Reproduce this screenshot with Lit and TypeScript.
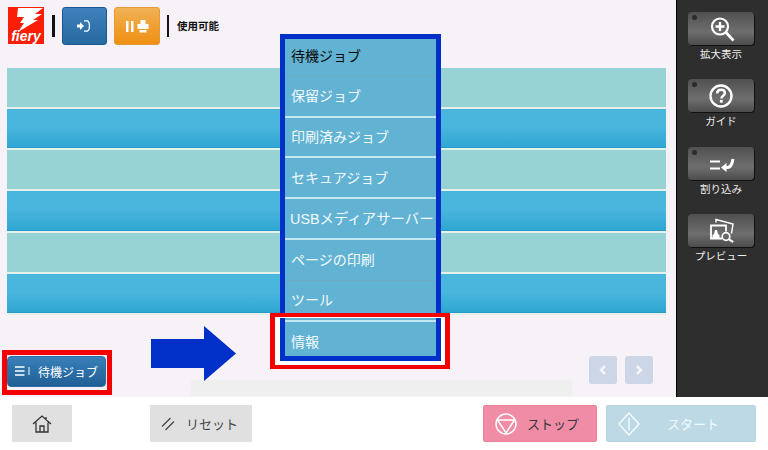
import { LitElement, html, css, svg } from "lit";
import { customElement } from "lit/decorators.js";

const MENU = [
  { t: "待機ジョブ", active: true, sep: false },
  { t: "保留ジョブ", sep: true },
  { t: "印刷済みジョブ", sep: true },
  { t: "セキュアジョブ", sep: true },
  { t: "USBメディアサーバー", sep: true, tight: true },
  { t: "ページの印刷", sep: false },
  { t: "ツール", sep: true },
  { t: "情報", sep: false },
];

const SIDE = [
  { t: "拡大表示", led: true, icon: svg`<circle cx="14" cy="11.5" r="8" fill="none" stroke="#fff" stroke-width="2.2"/><path d="M14 7v9M9.500 11.500h9" stroke="#fff" stroke-width="2.4"/><path d="M20 17.500l7.500 8" stroke="#fff" stroke-width="2.600"/>` },
  { t: "ガイド", led: true, icon: svg`<circle cx="15" cy="14" r="10.500" fill="none" stroke="#fff" stroke-width="2.400"/><path d="M11.200 11.500c0-2.600 1.700-3.800 3.900-3.800 2.300 0 3.800 1.300 3.800 3.200 0 2.800-3.500 2.800-3.500 5.600" fill="none" stroke="#fff" stroke-width="2.500"/><rect x="13.900" y="17.900" width="2.800" height="2.800" fill="#fff"/>` },
  { t: "割り込み", led: true, icon: svg`<path d="M4 12.500h10M4 19.500h10" stroke="#fff" stroke-width="2"/><path d="M15 18.500l5.500-4.500v9z" fill="#fff"/><path d="M19 18.500h2.500c3 0 4.500-2.500 5.500-8.500" fill="none" stroke="#fff" stroke-width="3"/>` },
  { t: "プレビュー", led: false, icon: svg`<path d="M10 6.500V3.500L27 8l-1.500 9.500" fill="none" stroke="#fff" stroke-width="1.500"/><path d="M16 22.500H5V9.500h15v6" fill="none" stroke="#fff" stroke-width="1.800"/><path d="M6.500 22.500V19l1.500-1 1-4h2l1 4 1.500 1v3.500z" fill="#fff"/><circle cx="20" cy="20.500" r="3.800" fill="none" stroke="#fff" stroke-width="1.700"/><path d="M22.800 23.200l4.400 3" stroke="#fff" stroke-width="2"/>` },
];

@customElement("app-root")
export class AppRoot extends LitElement {
  static styles = css`
    :host { display: block; width: 768px; height: 450px; overflow: hidden; position: relative; background: #fff;
      font-family: "Liberation Sans", "Noto Sans CJK JP", sans-serif; }
    .top { display: grid; grid-template-columns: 1fr 92px; height: 397px; }
    .main { background: #f6f2f7; display: flex; flex-direction: column; min-width: 0; }
    .head { height: 68px; box-sizing: border-box; padding: 7px 0 0 8px; display: flex; align-items: flex-start; flex: none; }
    .logo { width: 36px; height: 37px; background: #fa1e06; position: relative; overflow: hidden; display: block; flex: none; }
    .logo svg { position: absolute; left: 0; top: 0; }
    .logo span { position: absolute; left: 0; right: 0; top: 22px; text-align: center; color: #fff; font: italic bold 14px/14px "Liberation Sans", sans-serif; letter-spacing: 0; }
    .vr { width: 2.500px; height: 22px; background: #111; flex: none; margin-top: 8px; }
    .tb { width: 45px; height: 38px; box-sizing: border-box; border-radius: 3px; display: flex; align-items: center; justify-content: center; flex: none; }
    .tb.blue { background: linear-gradient(#3f81bd, #266aa0); border: 1px solid #1a5a94; margin-left: 7px; }
    .tb.orange { background: linear-gradient(#f1b255, #ef8f12); border: 1px solid #e69a35; margin-left: 7px; margin-right: 7px; width: 46px; }
    .status { font-size: 10.500px; line-height: 14px; font-weight: 700; color: #111; margin: 12px 0 0 8px; font-family: "Noto Sans CJK JP", sans-serif; }
    .rows { margin: 0 10px 0 7px; display: flex; flex-direction: column; flex: none; }
    .row { height: 39.170px; border-bottom: 2px solid #e6efea; }
    .row.a { background: #97d3d4; }
    .row.b { background: linear-gradient(#48b6dd, #4ab6dd 45%, #2fa7d3 97%, #1f97c4); }
    .footer { flex: 1; display: flex; position: relative; padding: 41px 0 0 7px; align-items: flex-start; }
    .queue { width: 99px; height: 31px; box-sizing: border-box; border-radius: 4px; background: linear-gradient(#3a80b9, #1f5f95); border: 1px solid #2a6ea3;
      color: #fff; font-size: 12px; display: flex; align-items: center; padding-left: 7px; gap: 8px; font-family: "Noto Sans CJK JP", sans-serif; }
    .strip { position: absolute; left: 191px; top: 65px; width: 381px; height: 16px; background: #efefef; }
    .pagers { margin-left: 483px; display: flex; gap: 8px; }
    .pg { width: 28px; height: 28px; border-radius: 3px; background: #ccd6e6; display: flex; align-items: center; justify-content: center; }
    .side { background: #2e2e2e; border-left: 1px solid #000; box-sizing: border-box; padding: 12px 0 0; display: flex; flex-direction: column; }
    .sb { width: 88px; height: 67.300px; display: flex; flex-direction: column; align-items: center; flex: none; }
    .sk { width: 66px; height: 33px; border-radius: 4px; background: linear-gradient(#505050, #6e6e6e 60%, #4c4c4c); box-shadow: 1px 1px 0 #111; position: relative; display: flex; align-items: center; justify-content: center; flex: none; }
    .led { position: absolute; left: 4px; top: 3px; width: 5px; height: 5px; border-radius: 50%; background: #2b2b2b; }
    .sl { color: #eee; font-size: 10.500px; line-height: 14px; margin-top: 2px; font-family: "Noto Sans CJK JP", sans-serif; white-space: nowrap; }
    .bottom { height: 53px; padding: 8px 12px 0; box-sizing: border-box; display: flex; align-items: flex-start; }
    .bb { height: 37px; box-sizing: border-box; display: flex; align-items: center; font-family: "Noto Sans CJK JP", sans-serif; font-size: 13px; flex: none; }
    .home { width: 60px; background: #e0e0e0; justify-content: center; }
    .reset { width: 102px; margin-left: 78px; background: #e0e0e0; color: #444; gap: 11px; padding-left: 11px; }
    .stop { width: 114px; margin-left: 231px; background: #f08ca5; border: 1px solid #ee8099; border-radius: 2px; color: #33393c; gap: 10px; padding-left: 11px; }
    .start { width: 150px; margin-left: 9px; background: #bcd9e5; border: 1px solid #b6d5e2; border-radius: 2px; color: #f3f9fb; gap: 27px; padding-left: 11px; }
    .menu { position: absolute; left: 280px; top: 34px; width: 161px; height: 327px; box-sizing: border-box; border: 5px solid #0030c8; background: #62b2d3; display: flex; flex-direction: column; overflow: hidden; }
    .mi { flex: none; height: 40.800px; box-sizing: border-box; padding: 0 0 2px 6px; color: #f2fafd; font-size: 14px; display: flex; align-items: center; white-space: nowrap; font-family: "Liberation Sans", "Noto Sans CJK JP", sans-serif; border-bottom: 1px solid #6fa9c4; }
    .mi:first-child { margin-top: -3px; }
    .mi.sep { border-bottom: 2px solid; border-image: linear-gradient(#24809f 50%, #c4e6f0 50%) 1; }
    .mi.active { color: #0a0a0a; }
    .mi.tight { padding-left: 5px; font-size: 14.400px; }
    .mi:last-child { border-bottom: 0; }
    .red { position: absolute; box-sizing: border-box; border: 4px solid #f50000; }
    .red.one { left: 2px; top: 350px; width: 110px; height: 45px; border-width: 5px; }
    .red.two { left: 270px; top: 313px; width: 180px; height: 56px; border-width: 4px 5px; box-shadow: inset 0 0 0 1px #fff; }
    .white { position: absolute; left: 274px; top: 361px; width: 172px; height: 4px; background: #fff; }
    .wl { position: absolute; width: 6px; top: 317px; height: 48px; background: #fff; }
    .arrow { position: absolute; left: 151px; top: 326px; }
  `;

  render() {
    return html`
      <div class="top">
        <div class="main">
          <div class="head">
            <div class="logo">
              <svg width="36" height="37" viewBox="0 0 36 37"><path d="M10 1h25l-8 6h7l-9 6h5L10 25l6-9h-4l4-6H9z" fill="#fff"/></svg>
              <span>fiery</span>
            </div>
            <div class="vr" style="margin-left:8px"></div>
            <div class="tb blue">
              <svg width="14" height="12" viewBox="0 0 14 12"><path d="M0 4.500h3V2l4 4-4 4V7.500H0z" fill="#fff"/><path d="M7 .8h3.500c1.500 1 2 3 2 5.200s-.5 4.200-2 5.200H7" fill="none" stroke="#fff" stroke-width="1.200"/></svg>
            </div>
            <div class="tb orange">
              <svg width="24" height="13" viewBox="0 0 24 13"><path d="M1 1h2.500v11H1zM6 1h2.500v11H6z" fill="#fff"/><path d="M15.500 0h5v4h3v5h-11V4h3z" fill="#fff"/><rect x="14.500" y="10" width="7" height="2.500" fill="#fff"/></svg>
            </div>
            <div class="vr"></div>
            <div class="status">使用可能</div>
          </div>
          <div class="rows">
            ${["a", "b", "a", "b", "a", "b"].map((c) => html`<div class="row ${c}"></div>`)}
          </div>
          <div class="footer">
            <div class="strip"></div>
            <div class="queue">
              <svg width="15" height="10" viewBox="0 0 15 10"><path d="M0 1h9.500M0 5h9.500M0 9h9.500" stroke="#fff" stroke-width="1.500"/><path d="M14 1v8" stroke="#fff" stroke-width="1"/></svg>
              <span>待機ジョブ</span>
            </div>
            <div class="pagers">
              <div class="pg"><svg width="10" height="12" viewBox="0 0 10 12"><path d="M7 2L3 6l4 4" fill="none" stroke="#f3f5f9" stroke-width="2.500"/></svg></div>
              <div class="pg"><svg width="10" height="12" viewBox="0 0 10 12"><path d="M3 2l4 4-4 4" fill="none" stroke="#f3f5f9" stroke-width="2.500"/></svg></div>
            </div>
          </div>
        </div>
        <div class="side">
          ${SIDE.map(
            (s) => html`<div class="sb">
              <div class="sk">
                ${s.led ? html`<span class="led"></span>` : ""}
                <svg width="30" height="28" viewBox="0 0 30 28">${s.icon}</svg>
              </div>
              <div class="sl">${s.t}</div>
            </div>`
          )}
        </div>
      </div>
      <div class="bottom">
        <div class="bb home">
          <svg width="20" height="20" viewBox="0 0 20 20"><path d="M1 10L10 2l9 8M4 8.500V18h12V8.500M8 18v-6h4v6M14 3v3" fill="none" stroke="#333" stroke-width="1.300"/></svg>
        </div>
        <div class="bb reset">
          <svg width="14" height="14" viewBox="0 0 14 14"><path d="M1 9.500L9.500 1M4.500 13L13 4.500" stroke="#444" stroke-width="1.200"/></svg>
          <span>リセット</span>
        </div>
        <div class="bb stop">
          <svg width="22" height="22" viewBox="0 0 22 22"><circle cx="11" cy="11" r="10" fill="none" stroke="#fff" stroke-width="1.500"/><path d="M2.500 7h17L11 20z" fill="none" stroke="#fff" stroke-width="1.500"/></svg>
          <span>ストップ</span>
        </div>
        <div class="bb start">
          <svg width="22" height="24" viewBox="0 0 22 24"><path d="M11 1l10 11-10 11L1 12z" fill="none" stroke="#f3f9fb" stroke-width="1.500"/><path d="M11 6v12" stroke="#f3f9fb" stroke-width="1.500"/></svg>
          <span>スタート</span>
        </div>
      </div>
      <div class="white"></div>
      <div class="wl" style="left:274px"></div>
      <div class="wl" style="left:440px"></div>
      <div class="menu">
        ${MENU.map(
          (m) => html`<div class="mi ${m.sep ? "sep" : ""} ${m.active ? "active" : ""} ${m.tight ? "tight" : ""}">${m.t}</div>`
        )}
      </div>
      <div class="red one"></div>
      <div class="red two"></div>
      <svg class="arrow" width="85" height="55" viewBox="0 0 85 55"><path d="M0 13h53V0l32 27.500L53 55V42H0z" fill="#0030c8"/></svg>
    `;
  }
}
